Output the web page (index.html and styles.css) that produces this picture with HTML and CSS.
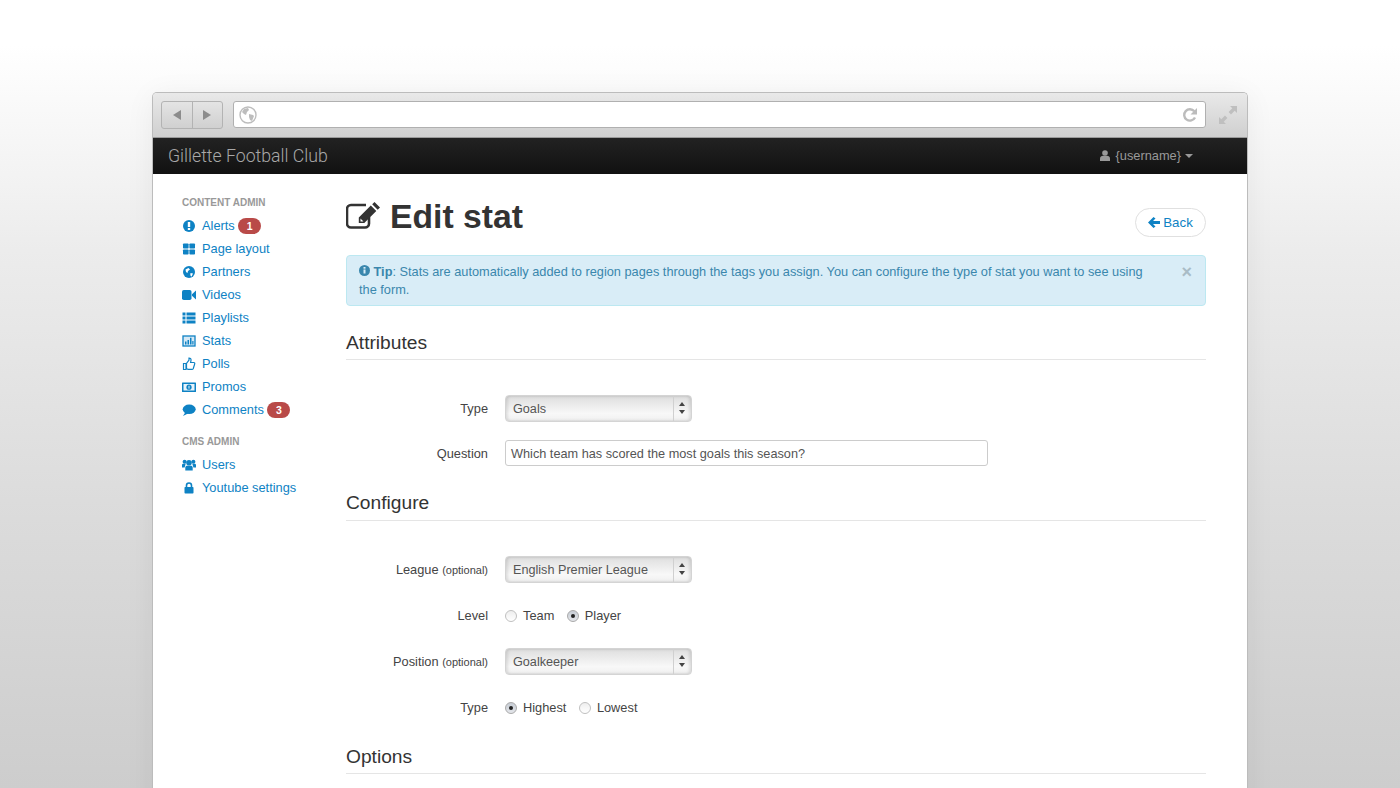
FILE: index.html
```html
<!DOCTYPE html>
<html lang="en">
<head>
<meta charset="utf-8">
<title>Edit stat</title>
<link rel="stylesheet" href="styles.css">
</head>
<body>
<div class="stage">
<div class="window">
  <div class="chrome">
    <div class="navbtns">
      <span class="navbtn"><svg width="8" height="10" viewBox="0 0 8 10"><path d="M8 0v10L0 5z" fill="#8c8c8c"/></svg></span>
      <span class="navbtn"><svg width="8" height="10" viewBox="0 0 8 10"><path d="M0 0v10l8-5z" fill="#8c8c8c"/></svg></span>
    </div>
    <div class="urlbar">
      <svg width="18" height="18" viewBox="0 0 18 18"><circle cx="9" cy="9" r="8" fill="none" stroke="#bdbdbd" stroke-width="1.4"/><path d="M5 3l4-1 1 2-2 2-1 3-2-1-2-2zM10 8l4 1 1 1-2 5-2-1-1-3z" fill="#bdbdbd"/></svg>
      <svg width="16" height="16" viewBox="0 0 16 16"><path d="M13 10.500A5.700 5.700 0 1 1 12.300 4.300" fill="none" stroke="#bcbcbc" stroke-width="2.400"/><path d="M15 1v6.500H8.500z" fill="#bcbcbc"/></svg>
    </div>
    <svg class="expand" width="18" height="18" viewBox="0 0 18 18"><path d="M11 0h7v7l-2.300-2.300-3.700 3.700-2.400-2.400 3.700-3.700zM7 18H0v-7l2.300 2.300 3.700-3.700 2.400 2.400-3.700 3.700z" fill="#bfbfbf"/></svg>
  </div>
  <div class="navbar">
    <a class="brand">Gillette Football Club</a>
    <span class="user">
      <svg width="10" height="11" viewBox="0 0 10 11"><circle cx="5" cy="3" r="2.800" fill="#999"/><path d="M0 11V8.500C0 6.800 1.500 6 3 5.800h4C8.500 6 10 6.800 10 8.500V11z" fill="#999"/></svg>
      {username}
      <i class="caret"></i>
    </span>
  </div>
  <div class="page">
    <nav class="sidebar">
      <h5 class="navhead">CONTENT ADMIN</h5>
      <ul class="navlist">
        <li><svg class="ico" viewBox="0 0 14 14"><circle cx="7" cy="7" r="6" fill="#0e82c4"/><rect x="5.800" y="3" width="2.400" height="5" fill="#fff"/><rect x="5.800" y="9" width="2.400" height="2" fill="#fff"/></svg>Alerts <span class="badge">1</span></li>
        <li><svg class="ico" viewBox="0 0 14 14"><rect x="1" y="1.500" width="5.600" height="5" rx=".8" fill="#0e82c4"/><rect x="7.400" y="1.500" width="5.600" height="5" rx=".8" fill="#0e82c4"/><rect x="1" y="7.500" width="5.600" height="5" rx=".8" fill="#0e82c4"/><rect x="7.400" y="7.500" width="5.600" height="5" rx=".8" fill="#0e82c4"/></svg>Page layout</li>
        <li><svg class="ico" viewBox="0 0 14 14"><circle cx="7" cy="7" r="6" fill="#0e82c4"/><path d="M3.500 4.500l3-1.500 1.500 1.500-2 1.500-.5 2-1.500-1zM8.500 8l2.500.5-1.500 3.200-1.200-1.500z" fill="#fff"/></svg>Partners</li>
        <li><svg class="ico" viewBox="0 0 14 14"><rect x="0" y="2" width="9.500" height="10" rx="1.800" fill="#0e82c4"/><path d="M10 6.300L14 2.500v9L10 7.700z" fill="#0e82c4"/></svg>Videos</li>
        <li><svg class="ico" viewBox="0 0 14 14"><path d="M.5 1.500h3V4.500h-3zM4.500 1.500h9V4.500h-9zM.5 5.500h3v3h-3zM4.500 5.500h9v3h-9zM.5 9.500h3v3h-3zM4.500 9.500h9v3h-9z" fill="#0e82c4"/></svg>Playlists</li>
        <li><svg class="ico" viewBox="0 0 14 14"><rect x="1" y="2" width="12" height="10" fill="#d6e9f5" stroke="#0e82c4" stroke-width="1.300"/><path d="M3 7.500h1.500V10.500H3zM5.500 6h1.500v4.500H5.500zM8 3.800h1.500v6.700H8zM10.300 7h1.200v3.500h-1.200z" fill="#0e82c4"/></svg>Stats</li>
        <li><svg class="ico" viewBox="0 0 14 14"><path d="M1.500 6.500h2.500v6H1.500zM4.500 11.500V6.500L7 3V1c1.500 0 2.200 1 2 2.300L8.600 5.500h3.100c1 0 1.300 1 .9 1.800L11.200 11.700c-.3.500-.6.700-1.200.7H6z" fill="none" stroke="#0e82c4" stroke-width="1.200"/></svg>Polls</li>
        <li><svg class="ico" viewBox="0 0 14 14"><rect x="0" y="2.500" width="14" height="9.500" rx=".5" fill="#0e82c4"/><rect x="1.500" y="4" width="11" height="6.500" fill="#e8f3fa"/><circle cx="7" cy="7.200" r="2.600" fill="#0e82c4"/><rect x="6.500" y="5.800" width="1" height="2.800" fill="#e8f3fa"/></svg>Promos</li>
        <li><svg class="ico" viewBox="0 0 14 14"><ellipse cx="7.200" cy="6.300" rx="6.500" ry="4.800" fill="#0e82c4"/><path d="M3.500 9L1 13l5.500-2.800z" fill="#0e82c4"/></svg>Comments <span class="badge">3</span></li>
      </ul>
      <h5 class="navhead second">CMS ADMIN</h5>
      <ul class="navlist">
        <li><svg class="ico" viewBox="0 0 14 14"><circle cx="7" cy="4.800" r="2.800" fill="#0e82c4"/><circle cx="2.600" cy="3.800" r="2" fill="#0e82c4"/><circle cx="11.400" cy="3.800" r="2" fill="#0e82c4"/><path d="M3.300 12.500V9.500C3.300 8.300 4.300 7.800 5.300 7.800h3.400c1 0 2 .5 2 1.700v3zM0 9.500V7c0-.7.700-1.200 1.500-1.200H3.700L2.600 9.500zM14 9.500V7c0-.7-.7-1.200-1.500-1.200H10.300l1.100 3.700z" fill="#0e82c4"/></svg>Users</li>
        <li><svg class="ico" viewBox="0 0 14 14"><rect x="2.500" y="6" width="9" height="6.500" rx=".8" fill="#0e82c4"/><path d="M4.500 6.500V4.500a2.500 2.500 0 0 1 5 0v2" fill="none" stroke="#0e82c4" stroke-width="1.600"/></svg>Youtube settings</li>
      </ul>
    </nav>
    <main class="main">
      <header class="pagehead">
        <h1 class="title">
          <svg width="36" height="32" viewBox="0 0 36 32"><path d="M23 18v6.500a4 4 0 0 1-4 4H5a4 4 0 0 1-4-4V10a4 4 0 0 1 4-4h15" transform="translate(0 -1)" fill="none" stroke="#333" stroke-width="2.600"/><path d="M28.500 2l5.500 5.500-2.300 2.300-5.500-5.500zM24.800 5.600l5.500 5.500-12 12H12.800v-5.500zM14.500 18.500v3h3l-1.500-1.500z" fill="#333"/></svg>
          Edit stat
        </h1>
        <a class="backbtn"><svg width="12" height="11" viewBox="0 0 12 11"><path d="M5.500 0l2 1.600L5 4h7v3H5l2.500 2.400-2 1.600L0 5.500z" fill="#0e82c4"/></svg>Back</a>
      </header>
      <div class="alert">
        <p class="alerttext"><svg width="11" height="11" viewBox="0 0 11 11"><circle cx="5.500" cy="5.500" r="5.500" fill="#3a87ad"/><rect x="4.500" y="4.500" width="2" height="4" fill="#d9edf7"/><rect x="4.500" y="2" width="2" height="1.700" fill="#d9edf7"/></svg> <b>Tip</b>: Stats are automatically added to region pages through the tags you assign. You can configure the type of stat you want to see using the form.</p>
        <span class="close">×</span>
      </div>
      <h3 class="section">Attributes</h3>
      <form class="form">
        <div class="row first"><label class="lab">Type</label><div class="select">Goals<span class="arrows"></span></div></div>
        <div class="row tight"><label class="lab">Question</label><div class="input">Which team has scored the most goals this season?</div></div>
      </form>
      <h3 class="section sec2">Configure</h3>
      <form class="form">
        <div class="row first"><label class="lab">League <small>(optional)</small></label><div class="select">English Premier League<span class="arrows"></span></div></div>
        <div class="row"><label class="lab">Level</label><div class="radios"><span class="radio"></span>Team<span class="radio on gap"></span>Player</div></div>
        <div class="row"><label class="lab">Position <small>(optional)</small></label><div class="select">Goalkeeper<span class="arrows"></span></div></div>
        <div class="row"><label class="lab">Type</label><div class="radios"><span class="radio on"></span>Highest<span class="radio gap"></span>Lowest</div></div>
      </form>
      <h3 class="section sec3">Options</h3>
    </main>
  </div>
</div>
</div>
</body>
</html>
```
FILE: styles.css
```css
* { box-sizing: border-box; }
html, body { margin: 0; height: 788px; overflow: hidden; }
body {
  font-family: "Liberation Sans", Arial, sans-serif;
  font-size: 12.8px;
  color: #333;
  background: linear-gradient(#fff 0, #fff 45px, #ececec 250px, #dcdcdc 500px, #cdcdcd 788px);
}
.stage { display: flex; justify-content: center; padding-top: 92px; height: 788px; overflow: hidden; }
.window {
  width: 1096px;
  height: 800px;
  flex: none;
  border: 1px solid #bcbcbc;
  border-bottom: 0;
  border-radius: 5px 5px 0 0;
  box-shadow: 0 4px 30px rgba(0,0,0,.06);
  background: #fff;
  overflow: hidden;
  display: flex;
  flex-direction: column;
}
.chrome {
  height: 45px;
  flex: none;
  background: linear-gradient(#e9e9e9, #cfcfcf);
  border-bottom: 1px solid #9a9a9a;
  display: flex;
  align-items: center;
  padding: 0 0 1px 8px;
}
.navbtns {
  display: flex;
  width: 62px;
  height: 28px;
  border: 1px solid #b3b3b3;
  border-radius: 3px;
  background: linear-gradient(#e4e4e4, #d0d0d0);
}
.navbtn { flex: 1; display: flex; align-items: center; justify-content: center; }
.navbtn + .navbtn { border-left: 1px solid #b3b3b3; }
.urlbar {
  margin-left: 10px;
  width: 973px;
  height: 27px;
  background: #fff;
  border: 1px solid #b0b0b0;
  border-radius: 3px;
  display: flex;
  align-items: center;
  justify-content: space-between;
  padding: 0 7px 0 5px;
}
.expand { margin-left: 13px; }
.navbar {
  height: 36px;
  flex: none;
  background: linear-gradient(#222, #111);
  display: flex;
  align-items: center;
  justify-content: space-between;
  padding: 0 54px 0 15px;
}
.brand { font-family: Roboto, "Liberation Sans", sans-serif; font-size: 17.700px; font-weight: 300; color: #a8a8a8; padding-bottom: 1px; }
.user { color: #999; font-size: 12.8px; display: flex; align-items: center; gap: 6px; padding-bottom: 1px; }
.caret { width: 0; height: 0; margin-left: -2px; border: 4px solid transparent; border-top: 4px solid #999; border-bottom: 0; }
.page { display: flex; flex: 1; }
.sidebar { width: 193px; flex: none; padding: 22px 0 0 29px; }
.navhead { margin: 0; font-size: 10px; line-height: 13px; font-weight: 700; color: #999; }
.navhead.second { margin-top: 14px; }
.navlist { list-style: none; margin: 5px 0 0; padding: 0; }
.navlist li { height: 23px; display: flex; align-items: center; color: #0e82c4; white-space: pre; }
.ico { width: 14px; height: 14px; margin-right: 6px; flex: none; }
.badge {
  background: #b94a48;
  color: #fff;
  font-size: 10.500px;
  font-weight: 700;
  height: 16px;
  line-height: 16px;
  padding: 0 8.500px;
  border-radius: 9px;
}
.main { width: 860px; flex: none; }
.pagehead { display: flex; justify-content: space-between; height: 81px; padding-top: 24px; }
.title { margin: 0; font-size: 33.700px; line-height: 36px; font-weight: 700; display: flex; align-items: center; gap: 8px; color: #333; height: 36px; }
.backbtn {
  margin-top: 10px;
  width: 71px;
  height: 29px;
  border: 1px solid #e0e0e0;
  border-radius: 15px;
  color: #0e82c4;
  font-size: 13.300px;
  display: flex;
  align-items: center;
  justify-content: center;
  gap: 3px;
}
.alert {
  background: #d9edf7;
  border: 1px solid #bce8f1;
  border-radius: 4px;
  color: #3a87ad;
  height: 51px;
  padding: 7px 13px 7px 12px;
  display: flex;
  justify-content: space-between;
}
.alerttext { margin: 0; width: 800px; line-height: 18px; font-size: 12.770px; }
.close { color: #a9bcc6; font-size: 18px; font-weight: 700; line-height: 20px; margin: -1px 0 0 0; }
.section { margin: 0; padding-top: 24px; height: 54px; border-bottom: 1px solid #e5e5e5; font-size: 19.200px; line-height: 26px; font-weight: 400; color: #333; }
.form { display: block; }
.row { display: flex; align-items: center; height: 27px; margin-top: 19px; }
.row.first { margin-top: 35px; }
.row.tight { margin-top: 17px; padding-top: 1px; }
.lab { width: 142px; text-align: right; margin-right: 17px; color: #444; }
.lab small { font-size: 11px; }
.select {
  width: 187px;
  height: 27px;
  border-radius: 4px;
  border: 1px solid #d4d4d4;
  background: linear-gradient(#dedede, #f8f8f8 70%, #f0f0f0);
  box-shadow: inset 2px 0 3px rgba(0,0,0,.1), inset -2px 0 3px rgba(0,0,0,.1);
  padding-left: 7px;
  line-height: 26px;
  font-size: 12.650px;
  color: #555;
  position: relative;
}
.arrows {
  position: absolute;
  right: 0;
  top: 0;
  width: 18px;
  height: 25px;
  border-left: 1px solid #d0d0d0;
}
.arrows::before, .arrows::after {
  content: "";
  position: absolute;
  left: 5px;
  border: 3px solid transparent;
}
.arrows::before { top: 6px; border-bottom: 4px solid #444; border-top: 0; }
.arrows::after { top: 14px; border-top: 4px solid #444; border-bottom: 0; }
.input {
  width: 483px;
  height: 26px;
  margin-top: -1px;
  border: 1px solid #ccc;
  border-radius: 3px;
  padding-left: 5px;
  line-height: 25px;
  font-size: 12.720px;
  color: #555;
}
.radios { display: flex; align-items: center; color: #444; }
.radio {
  width: 12px;
  height: 12px;
  border-radius: 50%;
  border: 1px solid #c0c0c0;
  background: linear-gradient(#eee, #fff);
  margin-right: 6px;
  position: relative;
}
.radio.gap { margin-left: 12.500px; }
.radio.on { background: linear-gradient(#c6ccd4, #e4e6ea); border-color: #aaa; }
.radio.on::after { content: ""; position: absolute; left: 3px; top: 3px; width: 4px; height: 4px; border-radius: 50%; background: #222; }
.sec2 { height: 55px; padding-top: 24px; }
.sec3 { height: 53px; padding-top: 23px; }
```
